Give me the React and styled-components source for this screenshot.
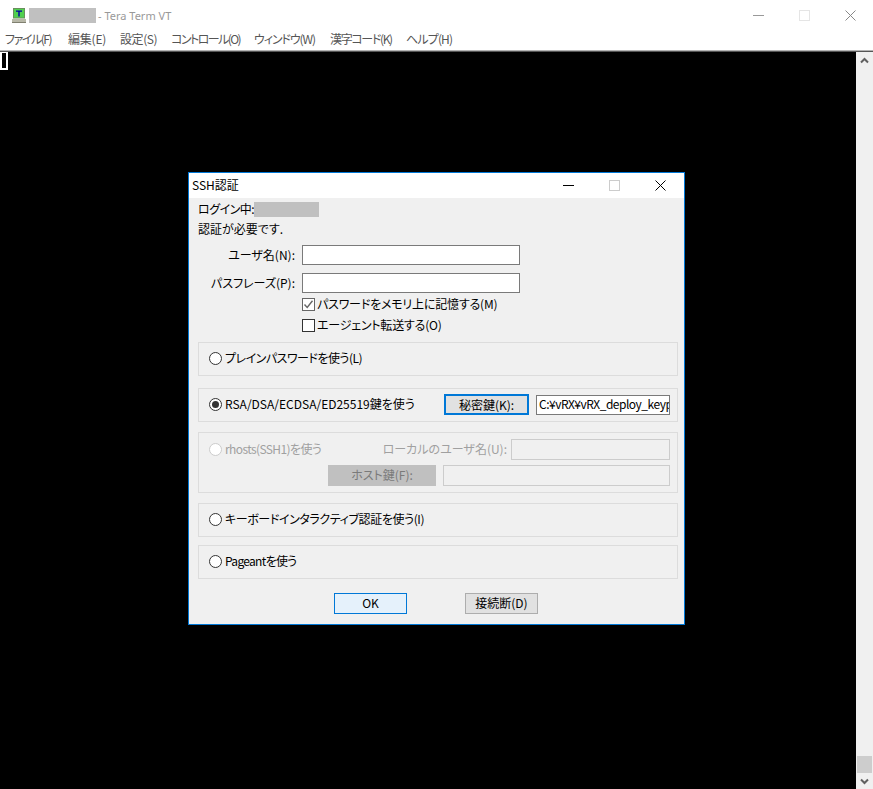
import React from "react";
import styled, { createGlobalStyle } from "styled-components";

const GlobalStyle = createGlobalStyle`
  html, body {
    margin: 0;
    padding: 0;
    background: #000;
  }
`;

const Window = styled.div`
  width: 873px;
  height: 789px;
  display: flex;
  flex-direction: column;
  overflow: hidden;
  background: #fff;
  font-family: "Noto Sans CJK JP", "Liberation Sans", sans-serif;
  font-feature-settings: "palt";
  font-size: 12px;
  color: #000;
`;

const TitleBar = styled.div`
  height: 30px;
  display: flex;
  align-items: center;
  padding-left: 12px;
  flex: none;
`;

const AppIcon = styled.svg`
  width: 14px;
  height: 15px;
  flex: none;
`;

const Masked = styled.span`
  display: block;
  flex: none;
  width: ${(p) => p.$w}px;
  height: ${(p) => p.$h}px;
  margin-left: ${(p) => p.$ml || 0}px;
  background: #c0c0c0;
`;

const TitleText = styled.span`
  margin-left: 2px;
  color: #999;
  font-family: "Noto Sans", "Liberation Sans", sans-serif;
  font-size: 11px;
`;

const WindowControls = styled.div`
  margin-left: auto;
  display: flex;
  align-items: center;
  gap: 35px;
  padding-right: 17px;
`;

const CtrlIcon = styled.svg`
  width: 11px;
  height: 11px;
  display: block;
`;

const MenuBar = styled.div`
  height: 20px;
  display: flex;
  align-items: center;
  padding-left: 5px;
  flex: none;
  color: #555;
`;

const MenuRule = styled.div`
  height: 1px;
  flex: none;
  background: #555;
  border-top: 1px solid #b4b4b4;
`;

const MenuItem = styled.span`
  display: block;
  width: ${(p) => p.$w}px;
  padding-bottom: 3px;
  white-space: nowrap;
  letter-spacing: ${(p) => p.$ls}px;
`;

const MainArea = styled.div`
  flex: 1;
  display: flex;
  min-height: 0;
`;

const Terminal = styled.div`
  position: relative;
  flex: 1;
  background: #000;
`;

const Cursor = styled.div`
  width: 8px;
  height: 18px;
  box-sizing: border-box;
  border: 2px solid #fff;
  border-top-width: 1px;
`;

const Scrollbar = styled.div`
  width: 17px;
  flex: none;
  background: #f0f0f0;
  display: flex;
  flex-direction: column;
  align-items: center;
  justify-content: space-between;
  padding: 5px 0 4px;
  box-sizing: border-box;
`;

const ScrollEnd = styled.div`
  display: flex;
  flex-direction: column;
  align-items: center;
  gap: 5px;
`;

const ScrollThumb = styled.div`
  width: 15px;
  height: 17px;
  background: #cdcdcd;
`;

const ArrowIcon = styled.svg`
  width: 9px;
  height: 7px;
  display: block;
`;

const Dialog = styled.div`
  position: absolute;
  left: 188px;
  top: 120px;
  width: 497px;
  height: 453px;
  box-sizing: border-box;
  border: 1px solid #0078d7;
  background: #f0f0f0;
  display: flex;
  flex-direction: column;
`;

const DialogTitle = styled.div`
  height: 25px;
  background: #fff;
  display: flex;
  align-items: center;
  padding-left: 3px;
  flex: none;
`;

const DialogControls = styled.div`
  margin-left: auto;
  display: flex;
  align-items: center;
  gap: 35px;
  padding-right: 18px;
`;

const DialogBody = styled.div`
  flex: 1;
  display: flex;
  flex-direction: column;
  padding: 4px 6px 0 9px;
`;

// Noto's tall metrics sit the glyphs a pixel low, the bottom padding evens that out
const Caption = styled.span`
  padding-bottom: 2px;
  white-space: nowrap;
  letter-spacing: ${(p) => p.$ls || 0}px;
`;

const TextRow = styled.div`
  display: flex;
  align-items: center;
  height: ${(p) => p.$h}px;
  margin-top: ${(p) => p.$mt || 0}px;
`;

const FieldRow = styled.div`
  display: flex;
  align-items: center;
  gap: 7px;
  margin-top: 8px;
`;

const FieldLabel = styled.label`
  width: 97px;
  padding-bottom: 2px;
  text-align: right;
  white-space: nowrap;
`;

const TextBox = styled.div`
  width: ${(p) => p.$w}px;
  height: ${(p) => p.$h || 20}px;
  box-sizing: border-box;
  flex: none;
  border: 1px solid ${(p) => (p.$disabled ? "#ccc" : "#7a7a7a")};
  background: ${(p) => (p.$disabled ? "#f0f0f0" : "#fff")};
  color: #000;
  padding-left: 2px;
  line-height: 16px;
  overflow: hidden;
  white-space: nowrap;
  letter-spacing: ${(p) => p.$ls || 0}px;
`;

const CheckRow = styled.div`
  display: flex;
  align-items: center;
  gap: 2px;
  height: 13px;
  margin-left: 104px;
  margin-top: ${(p) => p.$mt}px;
`;

const CheckBox = styled.span`
  width: 13px;
  height: 13px;
  box-sizing: border-box;
  flex: none;
  border: 1px solid ${(p) => (p.$checked ? "#666" : "#333")};
  background: #fff;
  display: flex;
  align-items: center;
  justify-content: center;
`;

const Group = styled.div`
  height: ${(p) => p.$h}px;
  margin-top: ${(p) => p.$mt}px;
  box-sizing: border-box;
  flex: none;
  border: 1px solid #dcdcdc;
  display: flex;
  align-items: center;
  padding: 0 7px 1px 10px;
`;

const StackedGroup = styled(Group)`
  flex-direction: column;
  align-items: stretch;
  padding-top: 6px;
`;

const GroupRow = styled.div`
  display: flex;
  align-items: center;
  margin-top: ${(p) => p.$mt || 0}px;
  justify-content: ${(p) => p.$justify || "flex-start"};
  gap: ${(p) => p.$gap || 0}px;
`;

const Radio = styled.span`
  width: 13px;
  height: 13px;
  box-sizing: border-box;
  flex: none;
  border-radius: 50%;
  border: 1px solid ${(p) => (p.$disabled ? "#ccc" : "#333")};
  background: #fff;
  margin-right: 3px;
  display: flex;
  align-items: center;
  justify-content: center;
  &::after {
    content: "";
    display: ${(p) => (p.$checked ? "block" : "none")};
    width: 7px;
    height: 7px;
    border-radius: 50%;
    background: #333;
  }
`;

const RadioLabel = styled(Caption)`
  color: ${(p) => (p.$disabled ? "#a0a0a0" : "#000")};
`;

const PushRight = styled.div`
  margin-left: auto;
  display: flex;
  align-items: center;
  gap: ${(p) => p.$gap}px;
  color: #a0a0a0;
`;

const Button = styled.button`
  width: ${(p) => p.$w}px;
  height: 21px;
  box-sizing: border-box;
  flex: none;
  padding: 0 0 2px;
  font: inherit;
  color: #000;
  border: 1px solid #adadad;
  background: #e1e1e1;
`;

const FocusButton = styled(Button)`
  border: 2px solid #0078d7;
`;

const DefaultButton = styled(Button)`
  border-color: #0078d7;
  background: #e5f1fb;
`;

const DisabledButton = styled(Button)`
  border-color: #c0c0c0;
  background: #c0c0c0;
  color: #7a7a7a;
`;

const ButtonRow = styled.div`
  display: flex;
  gap: 58px;
  margin: 14px 0 0 136px;
`;

// letter spacing per item: the katakana in the original UI font is narrower
const MENU = [
  { label: "ファイル(F)", ls: -1.45, w: 63 },
  { label: "編集(E)", ls: -0.2, w: 52 },
  { label: "設定(S)", ls: -0.4, w: 51 },
  { label: "コントロール(O)", ls: -1.55, w: 83 },
  { label: "ウィンドウ(W)", ls: -1.1, w: 76 },
  { label: "漢字コード(K)", ls: -1.35, w: 76 },
  { label: "ヘルプ(H)", ls: -0.85, w: 50 },
];

const CloseGlyph = ({ color }) => (
  <CtrlIcon viewBox="0 0 11 11">
    <path d="M0.5 0.5 L10.5 10.5 M10.5 0.5 L0.5 10.5" stroke={color} strokeWidth="1" fill="none" />
  </CtrlIcon>
);

const MaxGlyph = ({ color }) => (
  <CtrlIcon viewBox="0 0 11 11">
    <rect x="0.5" y="0.5" width="10" height="10" stroke={color} fill="none" />
  </CtrlIcon>
);

const MinGlyph = ({ color }) => (
  <CtrlIcon viewBox="0 0 11 11">
    <path d="M0 5.5 H11" stroke={color} fill="none" />
  </CtrlIcon>
);

const App = () => {
  return (
    <>
      <GlobalStyle />
      <Window>
        <TitleBar>
          <AppIcon viewBox="0 0 14 15">
            <rect x="1" y="0" width="12" height="10.5" fill="#6a8f5c" />
            <rect x="2" y="1" width="10" height="8.5" fill="#4fd04f" />
            <path d="M4 2.5 H10 V3.7 H7.7 V8.5 H6.3 V3.7 H4 Z" fill="#0000a0" />
            <rect x="0" y="11" width="14" height="3" fill="#b8b8a8" />
            <rect x="0" y="14" width="14" height="1" fill="#808070" />
          </AppIcon>
          <Masked $w={67} $h={15} $ml={3} />
          <TitleText>- Tera Term VT</TitleText>
          <WindowControls>
            <MinGlyph color="#999" />
            <MaxGlyph color="#e5e5e5" />
            <CloseGlyph color="#888" />
          </WindowControls>
        </TitleBar>
        <MenuBar>
          {MENU.map((m) => (
            <MenuItem key={m.label} $ls={m.ls} $w={m.w}>{m.label}</MenuItem>
          ))}
        </MenuBar>
        <MenuRule />
        <MainArea>
          <Terminal>
            <Cursor />
            <Dialog>
              <DialogTitle>
                <Caption>SSH認証</Caption>
                <DialogControls>
                  <MinGlyph color="#000" />
                  <MaxGlyph color="#ccc" />
                  <CloseGlyph color="#000" />
                </DialogControls>
              </DialogTitle>
              <DialogBody>
                <TextRow $h={15}>
                  <Caption $ls={-0.5}>ログイン中:</Caption>
                  <Masked $w={65} $h={15} />
                </TextRow>
                <TextRow $h={16} $mt={4}>
                  <Caption>認証が必要です.</Caption>
                </TextRow>
                <FieldRow>
                  <FieldLabel>ユーザ名(N):</FieldLabel>
                  <TextBox $w={218} />
                </FieldRow>
                <FieldRow>
                  <FieldLabel>パスフレーズ(P):</FieldLabel>
                  <TextBox $w={218} />
                </FieldRow>
                <CheckRow $mt={5}>
                  <CheckBox $checked>
                    <svg width="11" height="11" viewBox="0 0 11 11">
                      <path d="M1.5 5.5 L4.2 8.5 L9.5 1.8" stroke="#666" strokeWidth="1.4" fill="none" />
                    </svg>
                  </CheckBox>
                  <Caption $ls={-0.2}>パスワードをメモリ上に記憶する(M)</Caption>
                </CheckRow>
                <CheckRow $mt={8}>
                  <CheckBox />
                  <Caption $ls={-0.2}>エージェント転送する(O)</Caption>
                </CheckRow>
                <Group $h={34} $mt={10}>
                  <Radio />
                  <RadioLabel $ls={-0.5}>プレインパスワードを使う(L)</RadioLabel>
                </Group>
                <Group $h={34} $mt={12}>
                  <Radio $checked />
                  <RadioLabel>RSA/DSA/ECDSA/ED25519鍵を使う</RadioLabel>
                  <PushRight $gap={7}>
                    <FocusButton $w={85}>秘密鍵(K):</FocusButton>
                    <TextBox $w={134} $ls={-0.5}>C:¥vRX¥vRX_deploy_keyp</TextBox>
                  </PushRight>
                </Group>
                <StackedGroup $h={61} $mt={10}>
                  <GroupRow>
                    <Radio $disabled />
                    <RadioLabel $disabled $ls={-0.6}>rhosts(SSH1)を使う</RadioLabel>
                    <PushRight $gap={4}>
                      <Caption>ローカルのユーザ名(U):</Caption>
                      <TextBox $w={159} $h={21} $disabled />
                    </PushRight>
                  </GroupRow>
                  <GroupRow $mt={5} $justify="flex-end" $gap={7}>
                    <DisabledButton $w={108}>ホスト鍵(F):</DisabledButton>
                    <TextBox $w={227} $h={21} $disabled />
                  </GroupRow>
                </StackedGroup>
                <Group $h={34} $mt={10}>
                  <Radio />
                  <RadioLabel $ls={-0.4}>キーボードインタラクティブ認証を使う(I)</RadioLabel>
                </Group>
                <Group $h={34} $mt={8}>
                  <Radio />
                  <RadioLabel $ls={-0.7}>Pageantを使う</RadioLabel>
                </Group>
                <ButtonRow>
                  <DefaultButton $w={73}>OK</DefaultButton>
                  <Button $w={73}>接続断(D)</Button>
                </ButtonRow>
              </DialogBody>
            </Dialog>
          </Terminal>
          <Scrollbar>
            <ArrowIcon viewBox="0 0 9 7">
              <path d="M1 5.5 L4.5 2 L8 5.5" stroke="#606060" strokeWidth="2" fill="none" />
            </ArrowIcon>
            <ScrollEnd>
              <ScrollThumb />
              <ArrowIcon viewBox="0 0 9 7">
                <path d="M1 1.5 L4.5 5 L8 1.5" stroke="#606060" strokeWidth="2" fill="none" />
              </ArrowIcon>
            </ScrollEnd>
          </Scrollbar>
        </MainArea>
      </Window>
    </>
  );
};

export default App;
